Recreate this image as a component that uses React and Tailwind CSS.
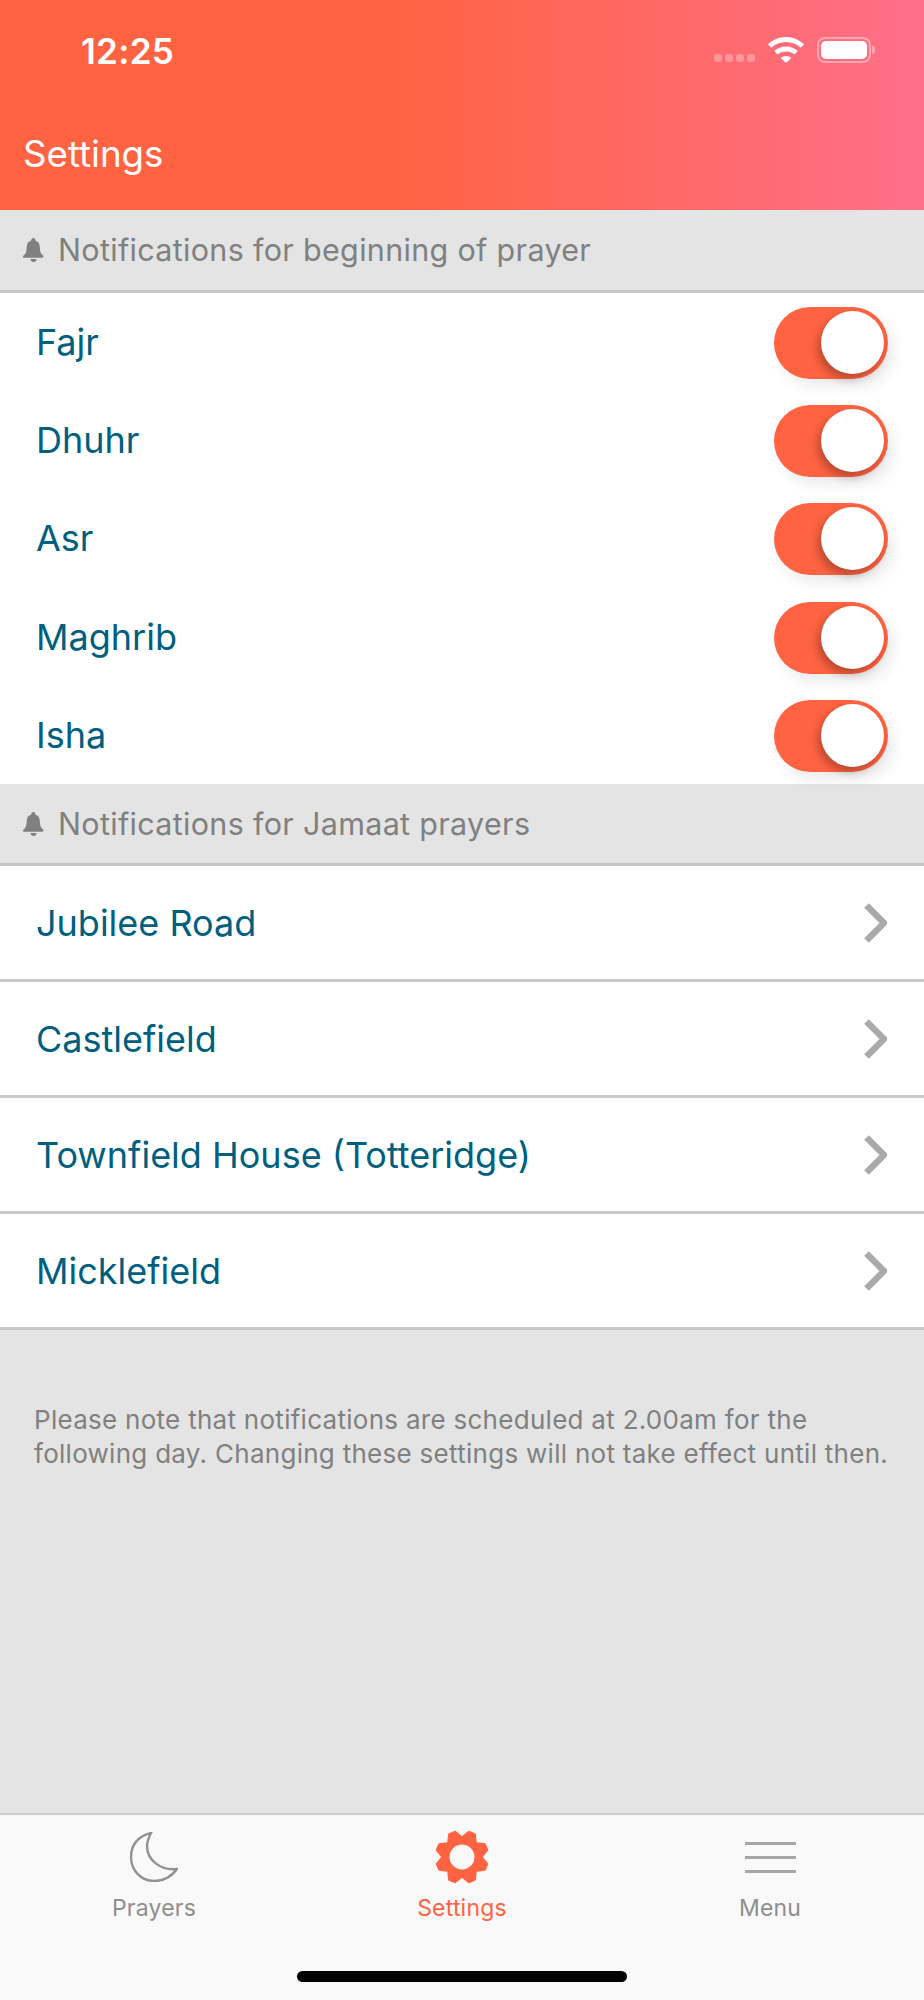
const FONT = "font-['Inter','Noto_Sans',sans-serif]";

function Bell() {
  return (
    <svg width="21" height="24" viewBox="0 0 21 24" className="shrink-0">
      <path fill="#808080" d="M10.5 0c1 0 1.7.8 1.7 1.8v.6c3 .8 4.6 3.3 4.6 6.6 0 4.2 1 6.300 2.300 7.600.8.800 1.400 1.300 1.400 2 0 .700-.500 1.200-1.300 1.200H1.300C.500 20 0 19.500 0 18.800c0-.700.600-1.200 1.400-2C2.700 15.500 3.700 13.400 3.700 9.200c0-3.300 1.600-5.800 4.600-6.600v-.6C8.300.800 9.500 0 10.500 0z" />
      <path fill="#808080" d="M7.500 21h6c0 1.700-1.300 3-3 3s-3-1.300-3-3z" />
    </svg>
  );
}

function SectionHeader({ title, tall }) {
  return (
    <div className={`flex shrink-0 items-center gap-[14px] border-b-[3px] border-[#c5c5c5] bg-[#e4e4e4] pl-[23px] ${tall ? "h-[83px]" : "h-[82px] pt-[1px]"}`}>
      <Bell />
      <span className="text-[30.5px] leading-none tracking-[0.32px] text-[#808080]">{title}</span>
    </div>
  );
}

function Toggle() {
  return (
    <div className="relative mt-[2px] h-[72px] w-[114px] rounded-full bg-[#ff6341] shadow-[6px_8px_14px_rgba(0,0,0,0.08)]">
      <div className="absolute right-[4px] top-[4px] size-[63px] rounded-full bg-white shadow-[-3px_5px_10px_rgba(0,0,0,0.28)]" />
    </div>
  );
}

function ToggleRow({ name }) {
  return (
    <div className="flex h-[98.2px] items-center justify-between pl-[36px] pr-[36px]">
      <span className="text-[36px] leading-none text-[#005f7f]">{name}</span>
      <Toggle />
    </div>
  );
}

function LinkRow({ name }) {
  return (
    <div className="flex h-[116px] shrink-0 items-center justify-between border-b-[3px] border-[#c9c9c9] bg-white pl-[36px] pr-[37px] pt-[2px]">
      <span className="text-[36px] leading-none text-[#005f7f]">{name}</span>
      <svg width="23" height="40" viewBox="0 0 23 40">
        <path d="M2.500 2.500 L20 20 L2.500 37.500" fill="none" stroke="#aaaaaa" strokeWidth="6.500" />
      </svg>
    </div>
  );
}

function Moon() {
  return (
    <svg width="48" height="50" viewBox="0 0 48 50">
      <path
        d="M21 1C8 4 1 13 1 25C1 38 11 49 24 49C34 49 42 44 47 37C32 39 17 29 17 14C17 9 19 5 21 1Z"
        fill="none"
        stroke="#929292"
        strokeWidth="2.400"
        strokeLinejoin="miter"
      />
    </svg>
  );
}

function Gear() {
  const teeth = [22.5, 67.5, 112.5, 157.5, 202.5, 247.5, 292.5, 337.5];
  return (
    <svg width="50" height="50" viewBox="0 0 50 50" className="overflow-visible">
      <g fill="#ff6341" stroke="#ff6341" strokeWidth="2.500" strokeLinejoin="round">
        {teeth.map((a) => (
          <polygon key={a} points="18,6.500 22,-0.750 28,-0.750 32,6.500" transform={`rotate(${a} 25 25)`} />
        ))}
      </g>
      <circle cx="25" cy="25" r="16.250" fill="none" stroke="#ff6341" strokeWidth="7.500" />
    </svg>
  );
}

function MenuIcon() {
  return (
    <div className="flex h-[50px] w-[51px] flex-col justify-center gap-[11px]">
      <div className="h-[3px] bg-[#a6a6a6]" />
      <div className="h-[3px] bg-[#a6a6a6]" />
      <div className="h-[3px] bg-[#a6a6a6]" />
    </div>
  );
}

function Tab({ icon, label, active }) {
  return (
    <div className="flex w-[308px] flex-col items-center">
      <div className="flex h-[50px] items-center">{icon}</div>
      <span className={`mt-[15px] text-[23px] leading-[22px] tracking-[0.2px] ${active ? "text-[#ff6341]" : "text-[#8e8e8e]"}`}>
        {label}
      </span>
    </div>
  );
}

export default function App() {
  return (
    <div className={`flex h-[2000px] w-[924px] flex-col overflow-hidden bg-[#e4e4e4] ${FONT}`}>
      <header className="flex h-[210px] shrink-0 flex-col bg-[linear-gradient(90deg,#ff6341_42%,#ff6f8a_100%)]">
        <div className="flex h-[132px] items-start justify-between pl-[81px] pr-[49px] pt-[32px]">
          <span className="text-[35px] font-semibold leading-[38px] tracking-[0.3px] text-white">12:25</span>
          <div className="flex items-center pt-[5px]">
            <div className="mt-[16px] flex gap-[3px]">
              <div className="size-[8px] rounded-[3px] bg-white/30" />
              <div className="size-[8px] rounded-[3px] bg-white/30" />
              <div className="size-[8px] rounded-[3px] bg-white/30" />
              <div className="size-[8px] rounded-[3px] bg-white/30" />
            </div>
            <svg width="36" height="26" viewBox="0 0 36 26" className="ml-[13px]">
              <path fill="#ffffff" d="M18 0c7 0 13.200 2.800 18 7.200l-3.300 3.600C28.800 7.200 23.700 5 18 5S7.200 7.200 3.300 10.800L0 7.200C4.800 2.800 11 0 18 0z" />
              <path fill="#ffffff" d="M18 9.500c4.500 0 8.600 1.700 11.700 4.500l-3.300 3.600C24.200 15.600 21.200 14.400 18 14.400s-6.200 1.200-8.400 3.200L6.300 14C9.400 11.200 13.500 9.500 18 9.500z" />
              <path fill="#ffffff" d="M18 19c2 0 3.900.7 5.300 2L18 26l-5.300-5c1.400-1.300 3.300-2 5.300-2z" />
            </svg>
            <div className="ml-[13px] flex items-center">
              <div className="flex h-[26px] w-[54px] items-center rounded-[8px] border-[2px] border-white/40 p-[2px]">
                <div className="h-full w-full rounded-[5px] bg-white" />
              </div>
              <div className="ml-[1px] h-[8px] w-[3px] rounded-r-full bg-white/40" />
            </div>
          </div>
        </div>
        <div className="pl-[23px]">
          <span className="text-[36.7px] leading-[44px] text-white">Settings</span>
        </div>
      </header>

      <SectionHeader tall title="Notifications for beginning of prayer" />
      <div className="shrink-0 bg-white">
        {["Fajr", "Dhuhr", "Asr", "Maghrib", "Isha"].map((n) => (
          <ToggleRow key={n} name={n} />
        ))}
      </div>

      <SectionHeader title="Notifications for Jamaat prayers" />
      {["Jubilee Road", "Castlefield", "Townfield House (Totteridge)", "Micklefield"].map((n) => (
        <LinkRow key={n} name={n} />
      ))}

      <p className="flex-1 pl-[34px] pr-[24px] pt-[73px] text-[26px] leading-[34.500px] tracking-[0.28px] text-[#808080]">
        Please note that notifications are scheduled at 2.00am for the following day. Changing these settings will not take effect until then.
      </p>

      <footer className="relative h-[187px] shrink-0 border-t-[2px] border-[#cbcbcb] bg-[#f9f9f9] pt-[17px]">
        <div className="flex">
          <Tab icon={<Moon />} label="Prayers" />
          <Tab icon={<Gear />} label="Settings" active />
          <Tab icon={<MenuIcon />} label="Menu" />
        </div>
        <div className="absolute bottom-[18px] left-[297px] h-[11px] w-[330px] rounded-full bg-black" />
      </footer>
    </div>
  );
}
